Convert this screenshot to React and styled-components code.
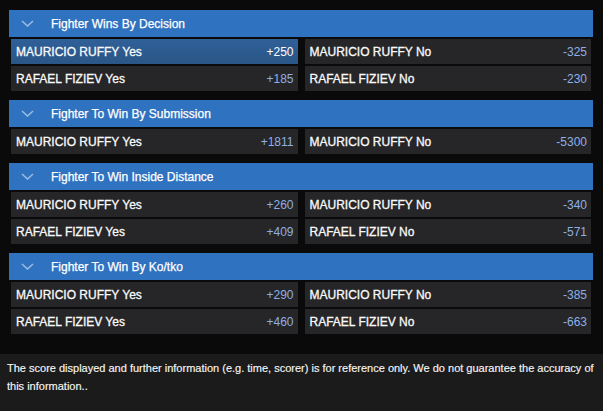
import React from 'react';
import styled, {createGlobalStyle} from 'styled-components';

const markets = [
  {
    title: 'Fighter Wins By Decision',
    rows: [
      [{name: 'MAURICIO RUFFY Yes', odds: '+250', active: true}, {name: 'MAURICIO RUFFY No', odds: '-325'}],
      [{name: 'RAFAEL FIZIEV Yes', odds: '+185'}, {name: 'RAFAEL FIZIEV No', odds: '-230'}],
    ],
  },
  {
    title: 'Fighter To Win By Submission',
    rows: [
      [{name: 'MAURICIO RUFFY Yes', odds: '+1811'}, {name: 'MAURICIO RUFFY No', odds: '-5300'}],
    ],
  },
  {
    title: 'Fighter To Win Inside Distance',
    rows: [
      [{name: 'MAURICIO RUFFY Yes', odds: '+260'}, {name: 'MAURICIO RUFFY No', odds: '-340'}],
      [{name: 'RAFAEL FIZIEV Yes', odds: '+409'}, {name: 'RAFAEL FIZIEV No', odds: '-571'}],
    ],
  },
  {
    title: 'Fighter To Win By Ko/tko',
    rows: [
      [{name: 'MAURICIO RUFFY Yes', odds: '+290'}, {name: 'MAURICIO RUFFY No', odds: '-385'}],
      [{name: 'RAFAEL FIZIEV Yes', odds: '+460'}, {name: 'RAFAEL FIZIEV No', odds: '-663'}],
    ],
  },
];

const Chevron = () => (
  <svg width="13" height="7" viewBox="0 0 13 7">
    <path d="M1 1 L6.5 6 L12 1" fill="none" stroke="#9bbbe2" strokeWidth="1.6" />
  </svg>
);

const App = () => {
  return (
    <>
      <GlobalStyle />
      <Page>
        <Markets>
          {markets.map(market => (
            <Market key={market.title}>
              <Header>
                <ChevronWrap><Chevron /></ChevronWrap>
                {market.title}
              </Header>
              <Rows>
                {market.rows.map((row, i) => (
                  <Row key={i}>
                    {row.map(sel => (
                      <Cell key={sel.name} $active={sel.active}>
                        <span>{sel.name}</span>
                        <Odds $active={sel.active}>{sel.odds}</Odds>
                      </Cell>
                    ))}
                  </Row>
                ))}
              </Rows>
            </Market>
          ))}
        </Markets>
        <Note>
          The score displayed and further information (e.g. time, scorer) is for reference only. We do not guarantee the accuracy of this information..
        </Note>
      </Page>
    </>
  );
};

const GlobalStyle = createGlobalStyle`
  html, body {
    margin: 0;
    background: #0a0a0a;
    font-family: "Liberation Sans", Arial, sans-serif;
  }
`;

const Page = styled.div`
  width: 603px;
  height: 411px;
  display: flex;
  flex-direction: column;
  background: #0a0a0a;
  overflow: hidden;
`;

const Markets = styled.div`
  padding: 10px 10px 0 9px;
  display: flex;
  flex-direction: column;
  gap: 9px;
`;

const Market = styled.div`
  display: flex;
  flex-direction: column;
`;

const Header = styled.div`
  height: 27px;
  background: #2f72bf;
  color: #fff;
  font-size: 12px;
  -webkit-text-stroke: 0.25px #fff;
  display: flex;
  align-items: center;
`;

const ChevronWrap = styled.span`
  width: 42px;
  padding-left: 12px;
  display: flex;
  align-items: center;
  box-sizing: border-box;
`;

const Rows = styled.div`
  padding: 2px 2px 0;
  display: flex;
  flex-direction: column;
  gap: 2px;
`;

const Row = styled.div`
  display: grid;
  grid-template-columns: 1fr 1fr;
  gap: 7px;
`;

const Cell = styled.div`
  height: 25px;
  padding: 0 4px 0 5px;
  display: flex;
  align-items: center;
  justify-content: space-between;
  color: #fafafa;
  font-size: 12px;
  background: ${p => (p.$active ? 'linear-gradient(#2f6098, #2a5687)' : '#262628')};

  & > span:first-child {
    -webkit-text-stroke: 0.3px #fafafa;
  }
`;

const Odds = styled.span`
  color: ${p => (p.$active ? '#ffffff' : '#8db0e4')};
`;

const Note = styled.div`
  margin-top: 20px;
  flex: 1;
  background: #1b1b1b;
  color: #f6f6f6;
  font-size: 11px;
  line-height: 18px;
  padding: 5px 7px;
  -webkit-text-stroke: 0.15px #f6f6f6;
`;

export default App;
